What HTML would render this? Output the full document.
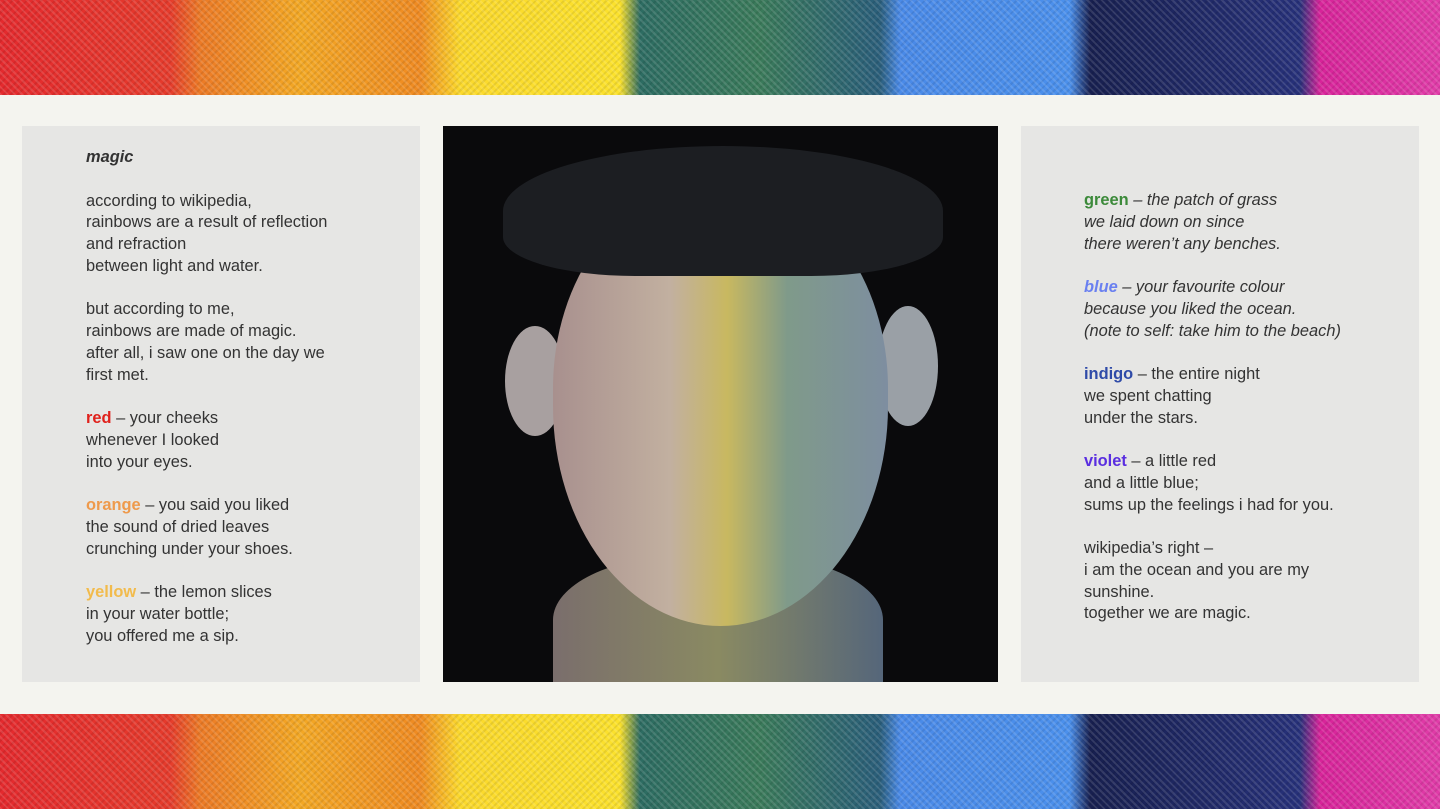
<!DOCTYPE html>
<html><head><style>
body{margin:0;width:1440px;height:809px;background:#f4f4ef;position:relative;overflow:hidden;font-family:"Liberation Sans",sans-serif;}
.band{position:absolute;left:0;width:1440px;height:95px;background:linear-gradient(90deg,#e42a2e 0,#e53b2c 170px,#ec7a26 200px,#f3a824 300px,#ef8a22 420px,#fbd92c 460px,#fbe12c 620px,#2d6c62 640px,#3a7a5a 760px,#2a5e7a 880px,#4a8ae8 900px,#4b90ec 1070px,#182050 1090px,#27317a 1300px,#d8249a 1320px,#e03ca8 1440px);}
.band::after{content:"";position:absolute;inset:0;background:repeating-linear-gradient(45deg,rgba(255,255,255,.12) 0 2px,transparent 2px 5px),repeating-linear-gradient(-45deg,rgba(0,0,0,.08) 0 2px,transparent 2px 5px);}
.panel{position:absolute;top:126px;height:556px;width:398px;background:#e6e6e4;}
.txt{position:absolute;font-size:16.4px;line-height:21.75px;color:#333;}
i{font-style:italic}
.photo{position:absolute;left:443px;top:126px;width:555px;height:556px;background:#0a0a0c;overflow:hidden}
</style></head><body>
<div class="band" style="top:0"></div>
<div class="band" style="top:714px"></div>
<div class="panel" style="left:22px"></div>
<div class="panel" style="left:1021px"></div>
<div class="photo">
<div style="position:absolute;left:110px;top:430px;width:330px;height:160px;border-radius:40% 40% 0 0;background:linear-gradient(90deg,#7a6e6c,#8a8a62,#55667a)"></div>
<div style="position:absolute;left:62px;top:200px;width:60px;height:110px;border-radius:50%;background:#a8a0a0"></div>
<div style="position:absolute;left:435px;top:180px;width:60px;height:120px;border-radius:50%;background:#9aa0a6"></div>
<div style="position:absolute;left:110px;top:60px;width:335px;height:440px;border-radius:46% 46% 50% 50%;background:linear-gradient(90deg,#a8908e 0%,#c2b0a0 35%,#c8b860 52%,#7f9a8a 70%,#7e8ea0 100%)"></div>
<div style="position:absolute;left:60px;top:20px;width:440px;height:130px;border-radius:50% 50% 30% 30%;background:#1c1e22"></div>
</div>
<div class="txt" style="left:86px;top:147px"><b><i>magic</i></b><br><br>according to wikipedia,<br>rainbows are a result of reflection<br>and refraction<br>between light and water.<br><br>but according to me,<br>rainbows are made of magic.<br>after all, i saw one on the day we<br>first met.<br><br><b style="color:#e0221c">red</b> – your cheeks<br>whenever I looked<br>into your eyes.<br><br><b style="color:#ee9a4c">orange</b> – you said you liked<br>the sound of dried leaves<br>crunching under your shoes.<br><br><b style="color:#f2bb4c">yellow</b> – the lemon slices<br>in your water bottle;<br>you offered me a sip.</div>
<div class="txt" style="left:1084px;top:190px"><b style="color:#3c8a3a">green</b> <i>– the patch of grass<br>we laid down on since<br>there weren’t any benches.</i><br><br><b style="color:#6a80f0"><i>blue</i></b> <i>– your favourite colour<br>because you liked the ocean.<br>(note to self: take him to the beach)</i><br><br><b style="color:#2f4ba8">indigo</b> – the entire night<br>we spent chatting<br>under the stars.<br><br><b style="color:#5a2ee0">violet</b> – a little red<br>and a little blue;<br>sums up the feelings i had for you.<br><br>wikipedia’s right –<br>i am the ocean and you are my<br>sunshine.<br>together we are magic.</div>
</body></html>
